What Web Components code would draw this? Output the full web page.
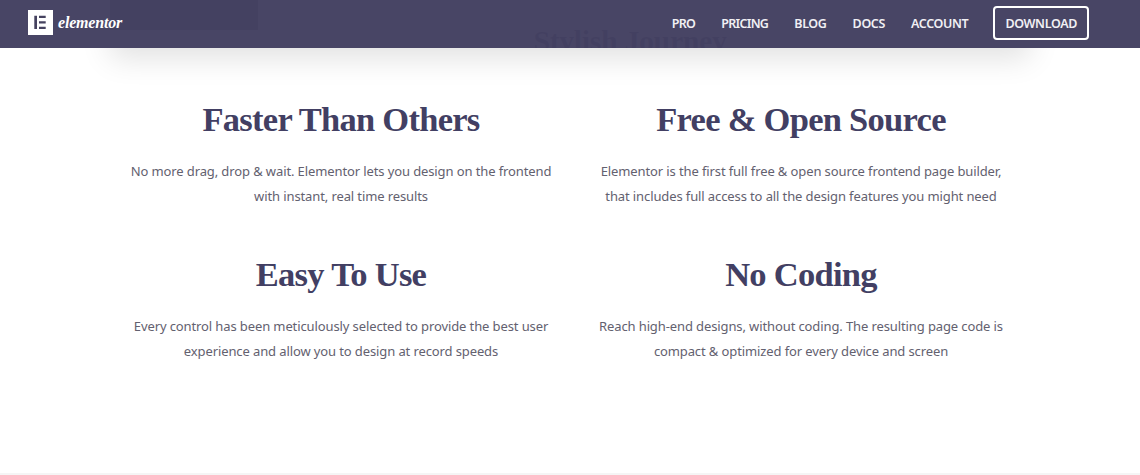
<!DOCTYPE html>
<html><head><meta charset="utf-8"><style>
html,body{margin:0;background:#fff;height:475px;overflow:hidden}
</style></head><body>
<template id="site-header-t"><style>
:host{display:flex;position:absolute;top:0;left:0;right:0;height:48px;align-items:center;background:rgba(68,65,98,.98);z-index:5;box-sizing:border-box;padding:0 51px 0 28px;justify-content:space-between;font-family:"Noto Sans","Open Sans",sans-serif}
.logo{display:flex;align-items:center;gap:5px;margin-top:-3px}
svg{display:block}
.word{font:italic 700 16px/25px "Liberation Serif",serif;color:#fff;letter-spacing:-.2px}
nav{display:flex;align-items:center;gap:26px}
</style><div class="logo"><svg width="25" height="25" viewBox="0 0 25 25"><rect width="25" height="25" fill="#fff"/><path d="M6.3 5.7h2.7v13.3H6.3zM11 5.7h6.7v2.2H11zM11 11.2h6.7v2.2H11zM11 16.8h6.7V19H11z" fill="#45425f"/></svg><span class="word">elementor</span></div><nav><slot></slot></nav></template>

<template id="nav-link-t"><style>
:host{display:inline-block;font-size:12.5px;font-weight:600;color:#f1f0f4;line-height:16px;letter-spacing:-.35px;white-space:nowrap}
:host([tight]){letter-spacing:-.7px}
:host([button]){border:2px solid #fff;border-radius:4px;padding:8px 10px 6px;margin-left:-1px;margin-top:-2px;height:34px;box-sizing:border-box}
</style><slot></slot></template>

<template id="hero-card-t"><style>
:host{display:block;height:48px;margin:-20px 110px 0;box-shadow:0 10px 30px rgba(0,0,0,.12);position:relative;text-align:center;background:#fff;padding-top:20px}
.btn{position:absolute;left:0;top:0;width:148px;height:50px;background:#35334c}
.t{font:700 30px/20px "Liberation Serif",serif;color:#2a2840;box-sizing:border-box;height:48px;overflow:hidden;padding-top:31px;margin-left:120px;letter-spacing:-.4px}
</style><div class="btn"></div><div class="t"><slot></slot></div></template>

<template id="feature-grid-t"><style>
:host{display:grid;grid-template-columns:460px 460px;justify-content:center;row-gap:43px;padding-top:49px;margin-left:2px}
</style><slot></slot></template>

<template id="feature-item-t"><style>
:host{display:block;text-align:center}
h2{margin:0 0 17px;font:700 34.5px/45px "Liberation Serif",serif;color:#423f63;letter-spacing:-.72px}
p{margin:0;font:400 13px/25px "Noto Sans","Open Sans",sans-serif;color:#63616f;letter-spacing:-.11px}
</style><h2><slot name="title"></slot></h2><p><slot></slot></p></template>

<template id="page-footer-line-t"><style>
:host{display:block;position:absolute;left:0;right:0;bottom:0;height:2px;background:#f5f5f5}
</style></template>

<site-header>
<nav-link tight>PRO</nav-link><nav-link tight>PRICING</nav-link><nav-link>BLOG</nav-link><nav-link>DOCS</nav-link><nav-link>ACCOUNT</nav-link><nav-link button>DOWNLOAD</nav-link>
</site-header>
<hero-card>Stylish Journey</hero-card>
<feature-grid>
<feature-item><span slot="title">Faster Than Others</span>No more drag, drop &amp; wait. Elementor lets you design on the frontend<br>with instant, real time results</feature-item>
<feature-item><span slot="title">Free &amp; Open Source</span>Elementor is the first full free &amp; open source frontend page builder,<br>that includes full access to all the design features you might need</feature-item>
<feature-item><span slot="title">Easy To Use</span>Every control has been meticulously selected to provide the best user<br>experience and allow you to design at record speeds</feature-item>
<feature-item><span slot="title">No Coding</span>Reach high-end designs, without coding. The resulting page code is<br>compact &amp; optimized for every device and screen</feature-item>
</feature-grid>
<page-footer-line></page-footer-line>
<script>
for (const n of ['site-header','nav-link','hero-card','feature-grid','feature-item','page-footer-line']) {
  customElements.define(n, class extends HTMLElement {
    constructor(){super();this.attachShadow({mode:'open'}).appendChild(document.getElementById(n+'-t').content.cloneNode(true));}
  });
}
</script>
</body></html>
